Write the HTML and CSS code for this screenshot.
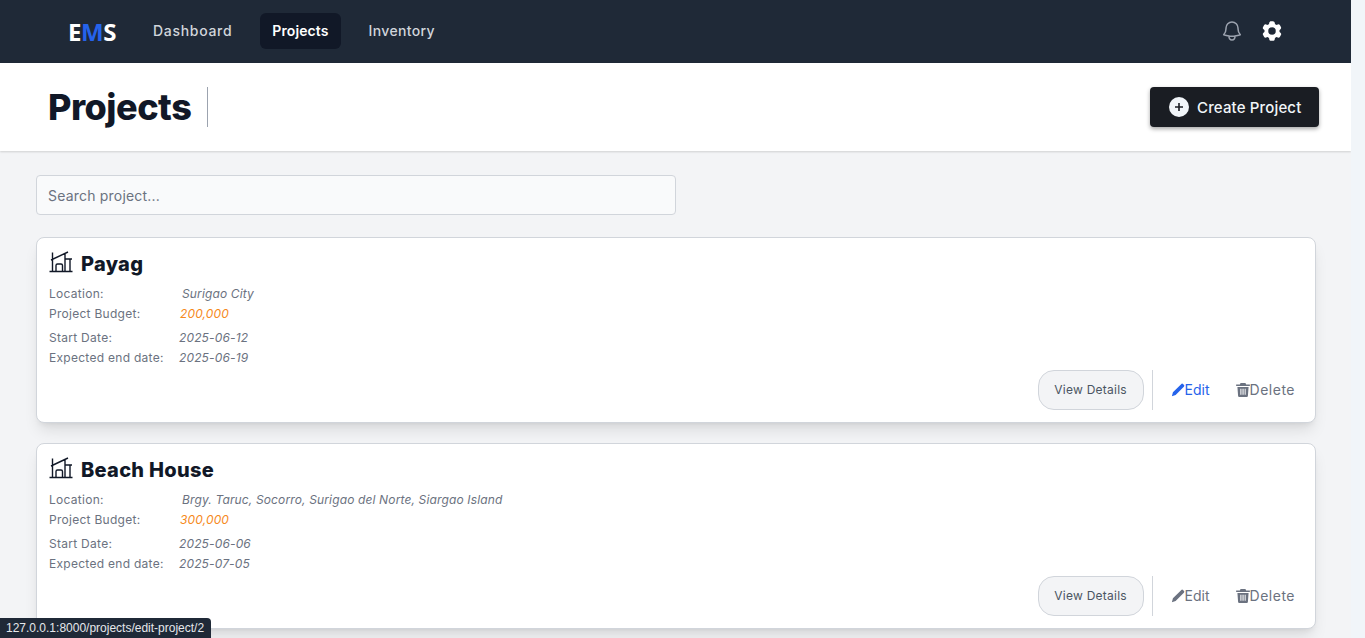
FILE: index.html
```html
<!DOCTYPE html>
<html lang="en">
<head>
<meta charset="utf-8">
<title>Projects</title>
<link rel="stylesheet" href="styles.css">
</head>
<body>
<div class="page">
  <nav class="nav">
    <div class="nav-left">
      <div class="logo">E<span class="logo-m">M</span>S</div>
      <a class="nav-link wide">Dashboard</a>
      <a class="nav-link active">Projects</a>
      <a class="nav-link">Inventory</a>
    </div>
    <div class="nav-right">
      <svg class="bell" viewBox="0 0 24 24" fill="none" stroke="currentColor" stroke-width="1.5" stroke-linecap="round" stroke-linejoin="round"><path d="M14.857 17.082a23.848 23.848 0 0 0 5.454-1.31A8.967 8.967 0 0 1 18 9.75V9A6 6 0 0 0 6 9v.75a8.967 8.967 0 0 1-2.312 6.022c1.733.64 3.56 1.085 5.455 1.31m5.714 0a24.255 24.255 0 0 1-5.714 0m5.714 0a3 3 0 1 1-5.714 0"/></svg>
      <svg class="gear" viewBox="0 0 24 24" fill="currentColor"><path fill-rule="evenodd" d="M11.078 2.25c-.917 0-1.699.663-1.85 1.567L9.05 4.889c-.02.12-.115.26-.297.348a7.493 7.493 0 0 0-.986.57c-.166.115-.334.126-.45.083L6.3 5.508a1.875 1.875 0 0 0-2.282.819l-.922 1.597a1.875 1.875 0 0 0 .432 2.385l.84.692c.095.078.17.229.154.43a7.598 7.598 0 0 0 0 1.139c.015.2-.059.352-.153.43l-.841.692a1.875 1.875 0 0 0-.432 2.385l.922 1.597a1.875 1.875 0 0 0 2.282.818l1.019-.382c.115-.043.283-.031.45.082.312.214.641.405.985.57.182.088.277.228.297.35l.178 1.071c.151.904.933 1.567 1.85 1.567h1.844c.916 0 1.699-.663 1.85-1.567l.178-1.072c.02-.12.114-.26.297-.349.344-.165.673-.356.985-.57.167-.114.335-.125.45-.082l1.02.382a1.875 1.875 0 0 0 2.28-.819l.923-1.597a1.875 1.875 0 0 0-.432-2.385l-.84-.692c-.095-.078-.17-.229-.154-.43a7.614 7.614 0 0 0 0-1.139c-.016-.2.059-.352.153-.43l.84-.692c.708-.582.891-1.59.433-2.385l-.922-1.597a1.875 1.875 0 0 0-2.282-.818l-1.02.382c-.114.043-.282.031-.449-.083a7.49 7.49 0 0 0-.985-.57c-.183-.087-.277-.227-.297-.348l-.179-1.072a1.875 1.875 0 0 0-1.85-1.567h-1.843ZM12 15.75a3.75 3.75 0 1 0 0-7.5 3.75 3.75 0 0 0 0 7.5Z"/></svg>
    </div>
  </nav>

  <header class="header">
    <div class="title-wrap"><h1 class="title">Projects</h1></div>
    <button class="create-btn">
      <svg class="plus" viewBox="0 0 20 20"><circle cx="10" cy="10" r="10" fill="#f1f5f9"/><path d="M10 6v8M6 10h8" stroke="#1a1d23" stroke-width="1.6"/></svg>
      Create Project
    </button>
  </header>

  <main class="content">
    <input class="search" type="text" placeholder="Search project...">

    <article class="card">
      <h2 class="card-title">
        <svg class="building" viewBox="0 0 24 24" fill="none" stroke="currentColor" stroke-width="1.4"><path d="M.5 21.500h23M3.500 21.500V2.500M2 10 19 2M16 21.500V4M16 9h7M21 9v12.500M7 21.500V15.500a1.500 1.500 0 0 1 1.500-1.500h3.500a1.500 1.500 0 0 1 1.500 1.500v6"/></svg>
        Payag
      </h2>
      <div class="row"><span class="label">Location:</span><span class="value loc">Surigao City</span></div>
      <div class="row"><span class="label">Project Budget:</span><span class="value budget">200,000</span></div>
      <div class="row dates"><span class="label">Start Date:</span><span class="value date">2025-06-12</span></div>
      <div class="row"><span class="label">Expected end date:</span><span class="value date">2025-06-19</span></div>
      <div class="actions">
        <button class="details">View Details</button>
        <span class="sep"></span>
        <a class="action edit hot">
          <svg class="a-icon" viewBox="0 0 16 16" fill="currentColor"><path d="M11.600 1.300a1.600 1.600 0 0 1 2.300 0l.8.8a1.600 1.600 0 0 1 0 2.300L5.300 13.800 1 15l1.200-4.300z"/></svg>Edit
        </a>
        <a class="action del">
          <svg class="a-icon" viewBox="1 1 14 14.300" fill="currentColor"><path fill-rule="evenodd" d="M5.500 1h5l.7 1.500H15V4H1V2.500h3.800zM2.300 5h11.400l-.7 9.200A1.200 1.200 0 0 1 11.800 15.300H4.200A1.200 1.200 0 0 1 3 14.200zM5.300 7v6h1.100V7zm2.200 0v6h1.100V7zm2.200 0v6h1V7z"/></svg>Delete
        </a>
      </div>
    </article>

    <article class="card">
      <h2 class="card-title">
        <svg class="building" viewBox="0 0 24 24" fill="none" stroke="currentColor" stroke-width="1.4"><path d="M.5 21.500h23M3.500 21.500V2.500M2 10 19 2M16 21.500V4M16 9h7M21 9v12.500M7 21.500V15.500a1.500 1.500 0 0 1 1.500-1.500h3.500a1.500 1.500 0 0 1 1.500 1.500v6"/></svg>
        Beach House
      </h2>
      <div class="row"><span class="label">Location:</span><span class="value loc">Brgy. Taruc, Socorro, Surigao del Norte, Siargao Island</span></div>
      <div class="row"><span class="label">Project Budget:</span><span class="value budget">300,000</span></div>
      <div class="row dates"><span class="label">Start Date:</span><span class="value date">2025-06-06</span></div>
      <div class="row"><span class="label">Expected end date:</span><span class="value date">2025-07-05</span></div>
      <div class="actions">
        <button class="details">View Details</button>
        <span class="sep"></span>
        <a class="action edit">
          <svg class="a-icon" viewBox="0 0 16 16" fill="currentColor"><path d="M11.600 1.300a1.600 1.600 0 0 1 2.300 0l.8.8a1.600 1.600 0 0 1 0 2.300L5.300 13.800 1 15l1.200-4.300z"/></svg>Edit
        </a>
        <a class="action del">
          <svg class="a-icon" viewBox="1 1 14 14.300" fill="currentColor"><path fill-rule="evenodd" d="M5.500 1h5l.7 1.500H15V4H1V2.500h3.800zM2.300 5h11.400l-.7 9.200A1.200 1.200 0 0 1 11.800 15.300H4.200A1.200 1.200 0 0 1 3 14.200zM5.300 7v6h1.100V7zm2.200 0v6h1.100V7zm2.200 0v6h1V7z"/></svg>Delete
        </a>
      </div>
    </article>
  </main>
</div>
<div class="scroll-track"></div>
<div class="status">127.0.0.1:8000/projects/edit-project/2</div>
</body>
</html>
```

FILE: styles.css
```css
* { box-sizing: border-box; }
html, body { height: 100%; }
body {
  margin: 0;
  display: flex;
  overflow: hidden;
  background: #f3f4f6;
  font-family: Inter, "Liberation Sans", sans-serif;
  color: #111827;
}
.page { width: 1351px; flex: none; height: 638px; overflow: hidden; }
.scroll-track { flex: 1; background: #f1f5f9; }

.nav {
  height: 63px;
  background: #1f2937;
  display: flex;
  align-items: center;
  justify-content: space-between;
  padding: 0 67px 1px 68px;
}
.nav-left { display: flex; align-items: center; gap: 16px; }
.logo {
  font-family: "Open Sans", sans-serif;
  font-size: 24px;
  font-weight: 700;
  color: #fff;
  letter-spacing: -0.4px;
  width: 57px;
}
.logo-m { color: #2563eb; }
.nav-link {
  height: 36px;
  padding: 0 12px 2px;
  border-radius: 6px;
  display: flex;
  align-items: center;
  font-size: 14px;
  font-weight: 500;
  letter-spacing: 0.35px;
  color: #d1d5db;
}
.nav-link.wide { letter-spacing: 0.7px; }
.nav-link.active { background: #111827; color: #fff; font-weight: 600; letter-spacing: 0.1px; }
.nav-right { display: flex; align-items: center; gap: 16px; }
.bell { width: 24px; height: 24px; color: #9ca3af; }
.gear { width: 24px; height: 24px; color: #fff; }

.header {
  height: 88px;
  background: #fff;
  box-shadow: 0 1px 2px rgba(0,0,0,.15);
  display: flex;
  align-items: center;
  justify-content: space-between;
  padding: 0 32px 0 48px;
  position: relative;
}
.title-wrap { border-right: 1px solid #9ca3af; padding-right: 16px; height: 40px; display: flex; align-items: center; }
.title { margin: 0; font-size: 36px; font-weight: 800; letter-spacing: -0.5px; color: #111827; }
.create-btn {
  width: 169px;
  height: 40px;
  background: #1a1d23;
  border: 0;
  border-radius: 4px;
  color: #f1f5f9;
  font: 500 15px Inter, sans-serif;
  letter-spacing: 0.15px;
  display: flex;
  align-items: center;
  gap: 8px;
  padding: 0 0 0 19px;
  box-shadow: 0 2px 4px rgba(0,0,0,.35);
}
.plus { width: 20px; height: 20px; }

.content { padding: 24px 35px 0 36px; }
.search {
  display: block;
  width: 640px;
  height: 40px;
  margin-bottom: 22px;
  padding: 0 11px;
  background: #f9fafb;
  border: 1px solid #d1d5db;
  border-radius: 4px;
  font: 14px Inter, sans-serif;
  letter-spacing: 0.2px;
}
.search::placeholder { color: #6b7280; opacity: 1; }

.card {
  height: 186px;
  margin-bottom: 20px;
  background: #fff;
  border: 1px solid #d1d5db;
  border-radius: 8px;
  box-shadow: 0 10px 15px -3px rgba(0,0,0,.1), 0 4px 6px -4px rgba(0,0,0,.1);
  padding: 12px 12px 0;
  display: flex;
  flex-direction: column;
}
.card-title {
  margin: 0 0 5px;
  height: 28px;
  display: flex;
  align-items: center;
  gap: 8px;
  font-size: 20px;
  font-weight: 800;
  letter-spacing: 0.3px;
  color: #111827;
}
.building { width: 24px; height: 24px; margin-top: -4px; }
.row { display: flex; height: 20px; align-items: center; font-size: 12px; color: #6b7280; }
.row.dates { margin-top: 4px; }
.label { width: 130px; flex: none; letter-spacing: 0.28px; }
.value { font-style: italic; letter-spacing: 0.14px; }
.loc { padding-left: 3px; }
.budget { color: #f68a1e; padding-left: 1px; }
.actions {
  margin-top: auto;
  padding-bottom: 12px;
  display: flex;
  align-items: center;
  justify-content: flex-end;
  padding-right: 8px;
}
.details {
  width: 106px;
  height: 40px;
  background: #f3f4f6;
  border: 1px solid #d1d5db;
  border-radius: 16px;
  color: #4b5563;
  font: 12px Inter, sans-serif;
  letter-spacing: 0.25px;
  padding-bottom: 2px;
}
.sep { width: 1px; height: 40px; background: #d1d5db; margin: 0 18px 0 8px; }
.action { display: flex; align-items: center; font-size: 14px; color: #6b7280; padding-bottom: 1px; }
.action.hot { color: #2563eb; }
.del { margin-left: 26px; letter-spacing: 0.5px; }
.a-icon { width: 14px; height: 14px; }

.status {
  position: fixed;
  left: 0;
  bottom: 0;
  height: 20px;
  width: 211px;
  padding: 0 6px;
  background: #1f2937;
  border-top-right-radius: 4px;
  color: #e5e7eb;
  font: 12px/20px "Liberation Sans", sans-serif;
  white-space: nowrap;
}
```
